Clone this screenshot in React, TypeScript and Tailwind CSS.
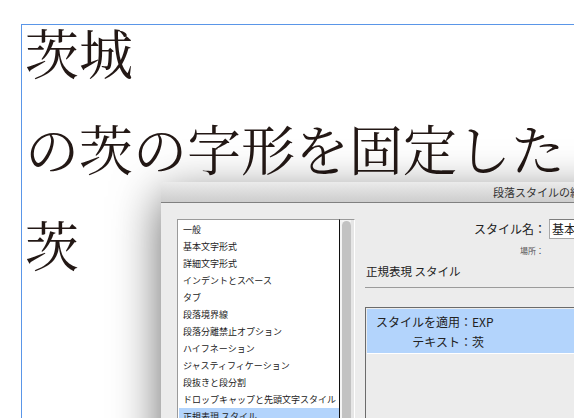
import React from 'react';

const items = [
  '一般',
  '基本文字形式',
  '詳細文字形式',
  'インデントとスペース',
  'タブ',
  '段落境界線',
  '段落分離禁止オプション',
  'ハイフネーション',
  'ジャスティフィケーション',
  '段抜きと段分割',
  'ドロップキャップと先頭文字スタイル',
  '正規表現 スタイル',
  'GREP スタイル',
];

const jp = { fontFamily: '"Noto Sans CJK JP", "Noto Sans", sans-serif' };

export default function App() {
  return (
    <div className="relative w-[574px] h-[418px] overflow-hidden bg-white" style={jp}>
      {/* text frame */}
      <div className="h-full pl-[21px] pt-[24px]">
        <div className="h-full border-l border-t border-[#5a96e8]">
          <div
            className="-mt-[21px] pl-[3px] text-[54px] leading-[96px] text-[#231815] whitespace-nowrap"
            style={{ fontFamily: '"Noto Serif CJK JP", "Noto Sans CJK JP", serif' }}
          >
            <div>茨城</div>
            <div>の茨の字形を固定した</div>
            <div>茨</div>
          </div>
        </div>
      </div>

      {/* dialog */}
      <div className="absolute left-[161px] top-[182px] w-[520px] h-[280px] bg-[#ececec] rounded-t-[4px] shadow-[0_14px_48px_rgba(0,0,0,0.6)] flex flex-col">
        <div className="h-[21px] shrink-0 rounded-t-[4px] border-b border-[#808080] bg-gradient-to-b from-[#ebebeb] to-[#cdcdcd] pl-[332px] text-[11px] leading-[20px] text-[#333] whitespace-nowrap">
          段落スタイルの編集
        </div>

        <div className="flex pt-[16px] pl-[16px]">
          {/* category list */}
          <div className="flex h-[220px] shrink-0">
            <div className="w-[163px] border-l border-t border-[#9a9a9a] border-r-[#111] border-r bg-white pt-px overflow-hidden">
              {items.map((it, i) => (
                <div
                  key={it}
                  className={`h-[17px] ml-px leading-[17px] pl-[4px] text-[9px] text-[#222] whitespace-nowrap ${
                    i === 11 ? 'bg-[#b3d4fc]' : ''
                  }`}
                >
                  {it}
                </div>
              ))}
            </div>
            <div className="w-[15px] border-t border-[#9a9a9a] bg-[#f4f4f4] flex pl-[2px] border-r border-r-white">
              <div className="w-[9px] h-[200px] mt-px rounded-t-[5px] bg-[#c2c2c2]" />
              <div className="w-[3px] bg-[#e6e6e6]" />
            </div>
          </div>

          {/* right side */}
          <div className="ml-[10px] w-[300px] shrink-0 flex flex-col">
            <div className="flex h-[20px] items-center">
              <div className="w-[184px] shrink-0 pr-[3px] text-right text-[12px] text-[#222] whitespace-nowrap">スタイル名：</div>
              <div className="h-[20px] w-[100px] shrink-0 border border-[#a8a8a8] border-t-[#7c7c7c] bg-white pl-[2px] text-[12px] leading-[18px] text-[#222] whitespace-nowrap overflow-hidden">
                基本段落
              </div>
            </div>
            <div className="mt-[6px] pl-[155px] text-[8px] leading-[12px] text-[#555] whitespace-nowrap">場所：</div>
            <div className="mt-[6px] pl-px text-[11.5px] leading-[16px] text-[#222] whitespace-nowrap">正規表現 スタイル</div>
            <div className="mt-[8px] h-px bg-[#9b9b9b]" />
            <div className="mt-[19px] h-[120px] border border-[#6b6b6b] bg-[#ececec] p-px">
              <div className="bg-[#b3d4fc] border-b border-white pt-[3px] pb-[1px] text-[12px] leading-[20px] text-[#222]">
                <div className="flex">
                  <span className="w-[105px] text-right">スタイルを適用：</span>
                  <span>EXP</span>
                </div>
                <div className="flex">
                  <span className="w-[105px] text-right">テキスト：</span>
                  <span>茨</span>
                </div>
              </div>
            </div>
          </div>
        </div>
      </div>
    </div>
  );
}
